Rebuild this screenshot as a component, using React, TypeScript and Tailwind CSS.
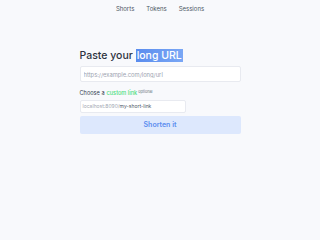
import React from 'react';

function App() {
  return (
    <div className="min-h-screen bg-[#f8f9fc] text-[#1f2937]" style={{ fontFamily: 'Inter, "Liberation Sans", sans-serif' }}>
      <nav className="flex justify-center gap-3 pt-[4px] text-[6px] text-[#4b5563]">
        <span>Shorts</span>
        <span>Tokens</span>
        <span>Sessions</span>
      </nav>

      <div className="mx-auto mt-[36px] w-[161px]">
        <h1 className="text-[10.5px] font-medium leading-[13px] text-[#2d3340]">
          Paste your{' '}
          <span className="inline-block bg-gradient-to-r from-[#5a8cee] to-[#7aa7f5] px-[1px] leading-[13px] text-white">
            long URL
          </span>
        </h1>

        <input
          className="mt-[4px] block h-[16px] w-full rounded-[2px] border border-[#e8eaf0] bg-white px-[3px] text-[5.8px] text-[#374151] outline-none placeholder:text-[#9ca3af]"
          placeholder="https://example.com/long/url"
        />

        <div className="mt-[8px] flex items-start whitespace-nowrap text-[5.6px] leading-[7px] text-[#374151]">
          <span>Choose a</span>
          <span className="ml-[2px] font-medium text-[#4ade80]">custom link</span>
          <span className="ml-[1px] -mt-[2px] text-[3.8px] text-[#6b7280]">optional</span>
        </div>

        <div className="mt-[3px] flex h-[13px] w-[106px] items-center rounded-[2px] border border-[#e8eaf0] bg-white px-[2px] text-[5px]">
          <span className="text-[#a0a6b1]">localhost:8090/</span>
          <span className="text-[#4b5563]">my-short-link</span>
        </div>

        <button className="mt-[3px] block h-[18px] w-full rounded-[2px] bg-[#dde8fd] text-[7px] font-semibold text-[#5b8def]">
          Shorten it
        </button>
      </div>
    </div>
  );
}

export default App;
